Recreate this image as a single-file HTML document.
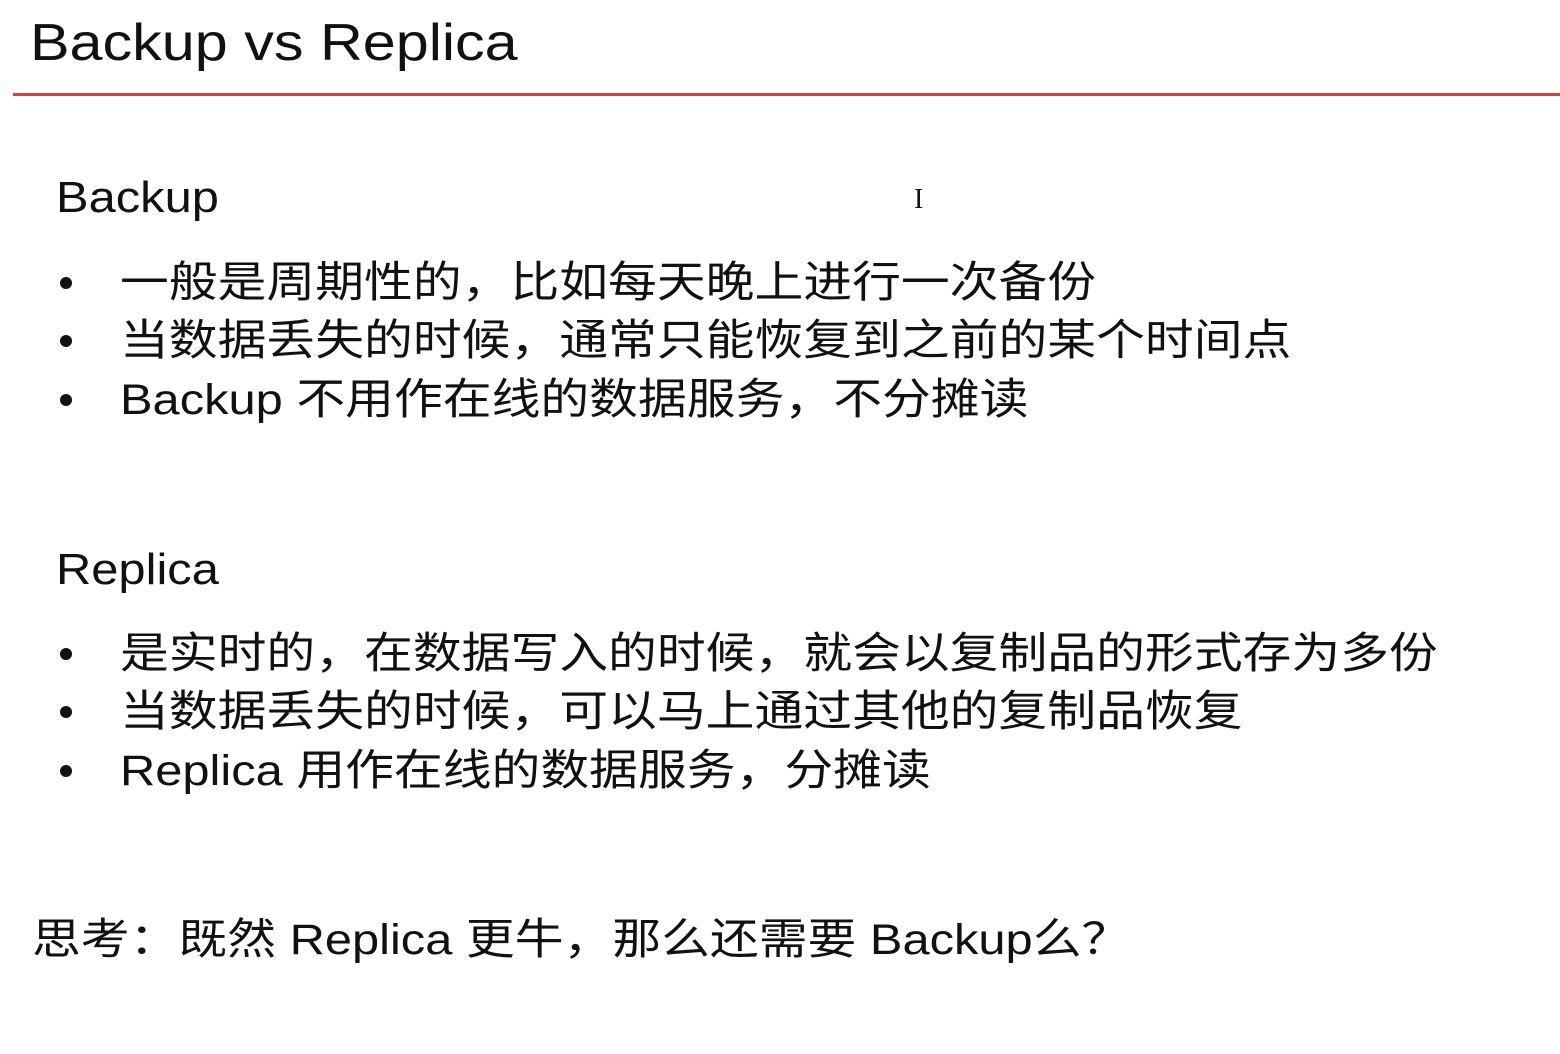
<!DOCTYPE html>
<html><head><meta charset="utf-8"><style>
body{margin:0;width:1560px;height:1054px;background:#fff;position:relative;overflow:hidden;font-family:"Liberation Sans","Noto Sans CJK SC",sans-serif;color:#111}
.t{position:absolute;white-space:nowrap;line-height:58px;transform-origin:0 50%;transform:scaleX(1.135)}
.h{font-size:44px;transform:scaleX(1.11)}
.l{font-size:43px;left:120px}
.b{position:absolute;left:60px;width:12px;height:12px;border-radius:50%;background:#111}
</style></head><body>
<div class="t" style="left:30px;top:14px;font-size:52px;line-height:58px;transform:scaleX(1.14)">Backup vs Replica</div>
<div style="position:absolute;left:13px;top:93px;width:1547px;height:3px;background:#c9473f"></div>
<div class="t h" style="left:56px;top:169px">Backup</div>
<div class="t" style="left:914px;top:182px;font-size:28px;line-height:36px;font-family:'Liberation Serif',serif;transform:none">I</div>
<div class="b" style="top:277px"></div><div class="t l" style="top:254px">一般是周期性的，比如每天晚上进行一次备份</div>
<div class="b" style="top:335px"></div><div class="t l" style="top:312px">当数据丢失的时候，通常只能恢复到之前的某个时间点</div>
<div class="b" style="top:394px"></div><div class="t l" style="top:371px">Backup 不用作在线的数据服务，不分摊读</div>
<div class="t h" style="left:56px;top:541px">Replica</div>
<div class="b" style="top:648px"></div><div class="t l" style="top:625px">是实时的，在数据写入的时候，就会以复制品的形式存为多份</div>
<div class="b" style="top:706px"></div><div class="t l" style="top:683px">当数据丢失的时候，可以马上通过其他的复制品恢复</div>
<div class="b" style="top:765px"></div><div class="t l" style="top:742px">Replica 用作在线的数据服务，分摊读</div>
<div class="t" style="left:32px;top:911px;font-size:43px">思考：既然 Replica 更牛，那么还需要 Backup么？</div>
</body></html>
